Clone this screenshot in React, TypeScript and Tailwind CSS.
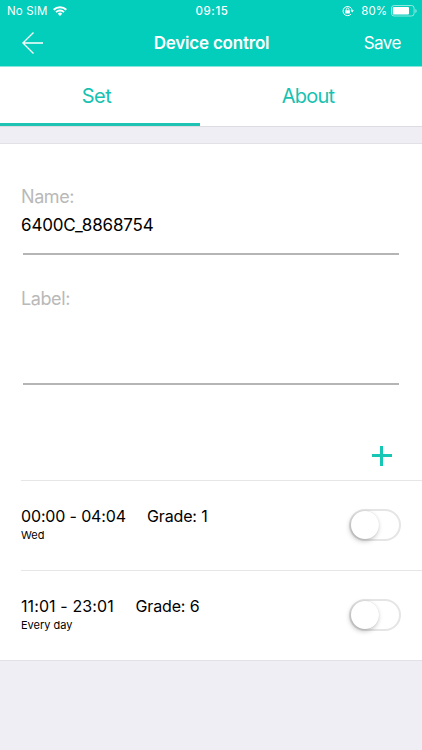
import React, { useState } from "react";

function WifiIcon() {
  return (
    <svg width="14" height="10" viewBox="0 0 14 10" fill="none" stroke="white">
      <path d="M0.700 3.700a9 9 0 0 1 12.600 0" strokeWidth="2" />
      <path d="M3 6.200a5.600 5.600 0 0 1 8 0" strokeWidth="1.800" />
      <path d="M7 10 4.800 7.700a3.100 3.100 0 0 1 4.400 0z" fill="white" stroke="none" />
    </svg>
  );
}

function RotationLockIcon() {
  return (
    <svg width="12" height="12" viewBox="0 0 12 12" fill="none" stroke="white">
      <path d="M9 9.200A4.600 4.600 0 1 1 10.200 5.600" strokeWidth="1" />
      <path d="M8.500 5.300h3.400l-1.700 2.300z" fill="white" stroke="none" />
      <rect x="3.300" y="5.200" width="4.600" height="3.200" rx="0.400" fill="white" stroke="none" />
      <path d="M4.300 5.500V4.300a1.300 1.300 0 0 1 2.600 0v1.200" strokeWidth="0.900" />
    </svg>
  );
}

function BatteryIcon() {
  return (
    <svg width="26" height="12" viewBox="0 0 26 12" fill="none">
      <rect x="0.500" y="0.500" width="22.600" height="10.500" rx="2.600" stroke="white" strokeOpacity="0.550" />
      <rect x="1.800" y="1.900" width="16.200" height="7.600" rx="1" fill="white" />
      <path d="M24.300 4v4c.8-.3 1.400-1.100 1.400-2s-.6-1.700-1.400-2z" fill="white" fillOpacity="0.550" />
    </svg>
  );
}

function Toggle({ label }: { label: string }) {
  const [on, setOn] = useState(false);
  return (
    <button
      role="switch"
      aria-checked={on}
      aria-label={label}
      onClick={() => setOn(!on)}
      className={`flex h-8 w-[52px] items-center rounded-full border-2 ${
        on ? "justify-end border-[#03cdbb] bg-[#03cdbb]" : "border-[#e5e5e5] bg-white"
      }`}
    >
      <span className="h-[28px] w-[28px] rounded-full bg-white shadow-[-1px_2px_5px_rgba(0,0,0,0.26),0_0_1px_rgba(0,0,0,0.15)]" />
    </button>
  );
}

type Schedule = { time: string; grade: string; days: string; timeClass: string; daysClass: string };

const schedules: Schedule[] = [
  {
    time: "00:00 - 04:04",
    grade: "Grade: 1",
    days: "Wed",
    timeClass: "w-[126px] tracking-[-0.150px]",
    daysClass: "tracking-[0px]",
  },
  {
    time: "11:01 - 23:01",
    grade: "Grade: 6",
    days: "Every day",
    timeClass: "w-[114.500px] tracking-[0.100px]",
    daysClass: "tracking-[0px]",
  },
];

export default function App() {
  return (
    <div className="flex h-[750px] w-[422px] flex-col overflow-hidden bg-[#efeef4] font-['Inter','Liberation_Sans',sans-serif] text-black">
      <header className="h-[67px] shrink-0 border-b border-[#8ae6dd] bg-[#03cdbb] text-white">
        <div className="grid h-[22px] grid-cols-3 items-center pl-[7px] pr-[5px] text-[11.500px] leading-none">
          <div className="flex items-center gap-[5px]">
            <span className="pt-0.5 tracking-[0.150px]">No SIM</span>
            <WifiIcon />
          </div>
          <span className="pt-0.5 text-center font-medium tracking-[0.600px]">09:15</span>
          <div className="flex items-center justify-end">
            <RotationLockIcon />
            <span className="ml-[7px] mr-1 pt-0.5">80%</span>
            <BatteryIcon />
          </div>
        </div>
        <div className="grid h-[42px] grid-cols-[1fr_auto_1fr] items-center pl-[22px] pr-[21px]">
          <button aria-label="Back" className="w-fit">
            <svg width="22" height="22" viewBox="0 0 22 22" fill="none" stroke="white" strokeWidth="1.300">
              <path d="M11.500 0.500 0.900 11l10.600 10.500M0.900 11H21" />
            </svg>
          </button>
          <h1 className="pt-0.5 text-[17px] font-semibold tracking-[-0.200px]">Device control</h1>
          <button className="justify-self-end pt-0.5 text-[17px] tracking-[-0.500px]">Save</button>
        </div>
      </header>

      <nav className="flex h-[60px] shrink-0 border-b border-[#dddde1] bg-white text-[20px] tracking-[-0.500px] text-[#16c2b1]">
        <button className="w-[200px] border-b-[3px] border-[#1fc3b3] pr-[7px] pt-px">Set</button>
        <button className="flex-1 pb-0.5 pr-1.5 tracking-[-0.800px]">About</button>
      </nav>

      <main className="mt-4 h-[518px] shrink-0 border-y border-[#e2e2e6] bg-white">
        <section className="flex h-[336px] flex-col pl-[22px] pr-[23px]">
          <div className="ml-px h-[111px] border-b-2 border-[#b5b5b5] pt-[41px]">
            <label className="-ml-0.5 block text-[18px] leading-6 tracking-[-0.400px] text-[#b9b9b9]">Name:</label>
            <div className="-ml-0.5 mt-1 text-[17px] leading-6 tracking-[-0.150px]">6400C_8868754</div>
          </div>
          <div className="ml-px h-[130px] border-b-2 border-[#b5b5b5] pt-8">
            <label className="-ml-0.5 block text-[18px] leading-6 tracking-[-0.400px] text-[#b9b9b9]">Label:</label>
          </div>
          <button aria-label="Add schedule" className="mr-[7px] mt-[61px] self-end">
            <svg width="20" height="20" viewBox="0 0 20 20" stroke="#16c7b6" strokeWidth="3">
              <path d="M9.500 0v20M0 9.500h20" />
            </svg>
          </button>
        </section>
        <ul>
          {schedules.map((s) => (
            <li
              key={s.time}
              className="ml-[21px] flex h-[90px] items-center justify-between border-t border-[#e6e6e6] pb-0.5 pr-[21px]"
            >
              <div className="pb-0.5">
                <div className="flex text-[16px] leading-5">
                  <span className={s.timeClass}>{s.time}</span>
                  <span className="tracking-[-0.150px]">{s.grade}</span>
                </div>
                <div className="mt-0.5 text-[11px] leading-[14px]">
                  <span className={s.daysClass}>{s.days}</span>
                </div>
              </div>
              <Toggle label={s.time} />
            </li>
          ))}
        </ul>
      </main>
    </div>
  );
}
